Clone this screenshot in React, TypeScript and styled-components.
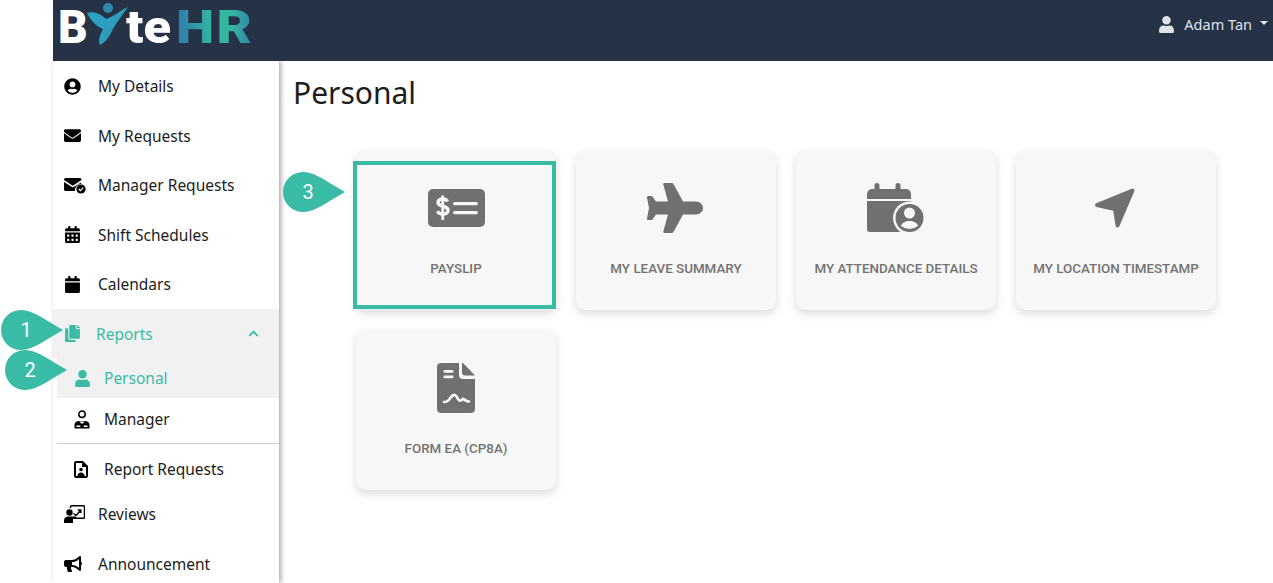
import React from 'react';
import styled, { createGlobalStyle } from 'styled-components';
import {
  FaUserCircle,
  FaEnvelope,
  FaCalendarAlt,
  FaCalendar,
  FaCopy,
  FaChevronUp,
  FaUser,
  FaBullhorn,
} from 'react-icons/fa';

const teal = '#3abba5';
const cardInk = '#707070';
const cardBg = '#f7f7f7';

const GlobalStyle = createGlobalStyle`
  html, body {
    margin: 0;
    padding: 0;
    background: #fff;
  }
  body {
    font-family: "Noto Sans", "Liberation Sans", sans-serif;
  }
`;

const Page = styled.div`
  position: relative;
  width: 1273px;
  height: 583px;
  overflow: hidden;
  padding-left: 53px;
  box-sizing: border-box;
  display: flex;
  flex-direction: column;
`;

const TopBar = styled.header`
  height: 61px;
  flex: none;
  background: #263246;
  display: flex;
  justify-content: space-between;
  align-items: flex-start;
  position: relative;
  z-index: 2;
`;

const Logo = styled.div`
  display: flex;
  align-items: flex-start;
  padding-left: 5px;
  font-family: Roboto, "Liberation Sans", sans-serif;
  font-weight: 900;
  font-size: 46px;
  line-height: 54px;
  color: #fff;
`;

const LogoFigure = styled.svg`
  width: 46px;
  height: 44px;
  margin: 2px -3px 0 -5px;
  flex: none;
`;

const LogoWhite = styled.span`
  display: inline-block;
  transform: scaleX(1.1);
  transform-origin: left center;
`;

const LogoAccent = styled.span`
  display: inline-block;
  margin-left: 9px;
  letter-spacing: 2px;
  transform: scaleX(1.18);
  transform-origin: left center;
  background: linear-gradient(90deg, #2e78ae 0%, #34b5a0 45%, #34b5a0 72%, #2f7fad 100%);
  -webkit-background-clip: text;
  background-clip: text;
  color: transparent;
`;

const UserMenu = styled.div`
  display: flex;
  align-items: center;
  height: 48px;
  padding-right: 5px;
  color: #dfe3e8;
  font-size: 14.5px;
  svg {
    width: 17px;
    height: 17px;
    margin-right: 9px;
  }
`;

const Caret = styled.span`
  width: 0;
  height: 0;
  margin-left: 8px;
  margin-top: -3px;
  border-left: 4px solid transparent;
  border-right: 4px solid transparent;
  border-top: 4px solid #dfe3e8;
`;

const Body = styled.div`
  flex: 1;
  display: flex;
  min-height: 0;
`;

const Sidebar = styled.nav`
  width: 226px;
  flex: none;
  padding-top: 0.25px;
  background: #fff;
  box-shadow: 2px 0 5px rgba(0, 0, 0, 0.35);
  position: relative;
  z-index: 1;
`;

const NavItem = styled.div<{ $open?: boolean }>`
  height: 49.5px;
  display: flex;
  align-items: center;
  padding-left: 11px;
  font-size: 15.5px;
  color: ${(p) => (p.$open ? teal : '#1c1c1c')};
  background: ${(p) => (p.$open ? '#f1f1f1' : 'transparent')};
`;

const NavIcon = styled.span<{ $w?: number; $size?: number; $tint?: boolean }>`
  width: ${(p) => p.$w ?? 34}px;
  flex: none;
  display: flex;
  align-items: center;
  font-size: ${(p) => p.$size ?? 17}px;
  color: ${(p) => (p.$tint ? 'inherit' : '#000')};
  svg {
    display: block;
  }
`;

const Chevron = styled.span`
  margin-left: auto;
  margin-right: 20px;
  display: flex;
  font-size: 11px;
`;

const SubList = styled.div`
  margin-left: 4px;
`;

const SubItem = styled.div<{ $active?: boolean; $h?: number }>`
  height: ${(p) => p.$h ?? 40}px;
  display: flex;
  align-items: center;
  padding-left: 17px;
  font-size: 15.5px;
  color: ${(p) => (p.$active ? teal : '#1c1c1c')};
  background: ${(p) => (p.$active ? '#f1f1f1' : 'transparent')};
`;

const SubIcon = styled.span`
  width: 30px;
  flex: none;
  display: flex;
  align-items: center;
  font-size: 17px;
  svg {
    display: block;
  }
`;

const Divider = styled.div`
  height: 1px;
  background: #c9c9c9;
  margin: 3px 0 5px;
`;

const Main = styled.main`
  flex: 1;
  padding: 8px 14px 0;
  min-width: 0;
`;

const Title = styled.h1`
  margin: 0;
  font-size: 30px;
  font-weight: 400;
  line-height: 48px;
  color: #1d1d1d;
`;

const CardGrid = styled.div`
  display: grid;
  grid-template-columns: repeat(4, 200px);
  grid-auto-rows: 160px;
  gap: 20px;
  margin: 33px 0 0 63px;
`;

const Card = styled.div`
  position: relative;
  background: ${cardBg};
  border-radius: 10px;
  box-shadow: 0 4px 10px rgba(0, 0, 0, 0.14);
  display: flex;
  flex-direction: column;
  align-items: center;
`;

const CardIcon = styled.div`
  height: 50px;
  margin-top: 33px;
  display: flex;
  align-items: center;
  justify-content: center;
  svg {
    display: block;
  }
`;

const CardLabel = styled.div`
  margin-top: 28px;
  font-family: Roboto, "Liberation Sans", sans-serif;
  font-weight: 500;
  font-size: 13.4px;
  line-height: 16px;
  color: #727272;
  white-space: nowrap;
`;

/* the tutorial's highlight around the first card */
const Highlight = styled.div`
  position: absolute;
  left: -3px;
  right: 0;
  top: 11px;
  bottom: 1px;
  border: 4px solid ${teal};
`;

const CalloutWrap = styled.div<{ $x: number; $y: number }>`
  position: absolute;
  left: ${(p) => p.$x}px;
  top: ${(p) => p.$y}px;
  width: 62px;
  height: 40px;
  z-index: 5;
  svg {
    display: block;
  }
`;

const CalloutNumber = styled.span`
  position: absolute;
  left: 0;
  top: 0;
  width: 50px;
  text-align: center;
  line-height: 40px;
  font-family: Roboto, "Liberation Sans", sans-serif;
  font-size: 20px;
  color: #fff;
`;

const Callout = ({ n, x, y }: { n: number; x: number; y: number }) => (
  <CalloutWrap $x={x} $y={y}>
    <svg width="62" height="40" viewBox="0 0 62 40">
      <path d="M20 0C33 0 47 12 62 20C47 28 33 40 20 40A20 20 0 0 1 20 0Z" fill={teal} />
    </svg>
    <CalloutNumber>{n}</CalloutNumber>
  </CalloutWrap>
);

const ManagerIcon = () => (
  <svg width="16" height="19" viewBox="0 0 16 19">
    <circle cx="8" cy="4.200" r="3.200" fill="none" stroke="#000" strokeWidth="1.500" />
    <path d="M0.500 18.500v-3.500c0-2.400 2.200-4 4.500-4h6c2.300 0 4.500 1.600 4.500 4v3.500z" fill="#000" />
    <path d="M5.200 11.500l2.800 2.400 2.800-2.400z" fill="#fff" />
    <path d="M2.500 17h3.800v-1.500H2.500zM9.700 17h3.800v-1.500H9.700z" fill="#fff" />
  </svg>
);

const ReportFileIcon = () => (
  <svg width="14" height="17" viewBox="0 0 14 17">
    <path
      fillRule="evenodd"
      d="M2 0h7l5 5v10a2 2 0 0 1-2 2H2a2 2 0 0 1-2-2V2a2 2 0 0 1 2-2zm0 2v13h10V6H8V2z"
      fill="#000"
    />
    <circle cx="7" cy="8.500" r="1.800" fill="#000" />
    <path d="M3.500 15c0-2.200 1.500-3.600 3.500-3.600s3.500 1.400 3.500 3.600z" fill="#000" />
  </svg>
);

const EnvelopeCheckIcon = () => (
  <svg width="22" height="17" viewBox="0 0 22 17">
    <path d="M1.500 1h14.500a1.500 1.500 0 0 1 1.500 1.500v.6L8.800 8.700 0 3.100v-.6A1.500 1.500 0 0 1 1.500 1z" fill="#000" />
    <path d="M0 5l8.800 5.600L17 5.400V7a6 6 0 0 0-5.900 7H1.500A1.500 1.500 0 0 1 0 12.500z" fill="#000" />
    <circle cx="17" cy="12" r="4.600" fill="#000" />
    <path d="M14.800 12l1.600 1.600 2.800-2.900" fill="none" stroke="#fff" strokeWidth="1.200" />
  </svg>
);

const ReviewsIcon = () => (
  <svg width="21" height="18" viewBox="0 0 21 18">
    <path d="M6.500 3V1.800a1 1 0 0 1 1-1h12a1 1 0 0 1 1 1v10.400a1 1 0 0 1-1 1H12" fill="none" stroke="#000" strokeWidth="1.500" />
    <path d="M9.500 8.500l2.500 2 4.500-5M13.800 5h3v3" fill="none" stroke="#000" strokeWidth="1.400" />
    <circle cx="5.500" cy="7.500" r="3.200" fill="#000" />
    <path d="M0 18v-2.500C0 13 2 11.500 4.500 11.500H12v2.500H9v4z" fill="#000" />
  </svg>
);

const PayslipIcon = () => (
  <svg width="57" height="38" viewBox="0 0 57 38">
    <rect width="57" height="38" rx="5" fill={cardInk} />
    <path
      d="M19.500 12.500C18.500 10.500 16.500 10 14.500 10c-2.500 0-4.500 1.300-4.500 3.500 0 5 10 2.500 10 7.800 0 2.300-2.200 3.700-5 3.700-2.500 0-4.500-.8-5.500-2.800"
      fill="none"
      stroke={cardBg}
      strokeWidth="3.400"
    />
    <path d="M14.700 6.500v24.500" stroke={cardBg} strokeWidth="2.800" />
    <rect x="25" y="13" width="25" height="3.200" rx="1.600" fill={cardBg} />
    <rect x="25" y="22" width="25" height="3.200" rx="1.600" fill={cardBg} />
  </svg>
);

const PlaneIcon = () => (
  <svg width="60" height="50" viewBox="0 0 60 50">
    <path
      d="M17 1Q17 0 19 0H26Q27 0 28 2L37 18.500H50C54 18.500 57 21.500 57 25S54 31.500 50 31.500H37L28 48Q27 50 26 50H19Q17 50 17.300 48.500L22 31.500H10L6.500 36.500Q6 37 5 37H2Q.7 37 1 35.500L3 25 1 14.500Q.7 13 2 13H5Q6 13 6.500 13.500L10 18.500H22L17.300 1.500z"
      fill={cardInk}
    />
  </svg>
);

const AttendanceIcon = () => (
  <svg width="58" height="50" viewBox="0 0 58 50" fill={cardInk}>
    <path d="M10 0a2.500 2.500 0 0 1 2.500 2.500V6h16V2.500a2.500 2.500 0 0 1 5 0V6H39a5 5 0 0 1 5 5v5H0v-5a5 5 0 0 1 5-5h2.500V2.500A2.500 2.500 0 0 1 10 0z" />
    <path d="M0 18h44v28a3 3 0 0 1-3 3H3a3 3 0 0 1-3-3z" />
    <circle cx="42.500" cy="35" r="16.500" fill={cardBg} />
    <circle cx="42.500" cy="35" r="14" />
    <circle cx="42.500" cy="30" r="5.500" fill={cardBg} />
    <path d="M34 43c1-3.500 4.500-5 8.500-5s7.500 1.500 8.500 5a14 14 0 0 1-17 0z" fill={cardBg} />
  </svg>
);

const LocationIcon = () => (
  <svg width="44" height="42" viewBox="0 0 44 42">
    <path
      d="M38.500 3.500L3 18L21 22L23.500 38.500z"
      fill={cardInk}
      stroke={cardInk}
      strokeWidth="4"
      strokeLinejoin="round"
    />
  </svg>
);

const FormIcon = () => (
  <svg width="38" height="50" viewBox="0 0 38 50">
    <path d="M4 0h18v12a4 4 0 0 0 4 4h12v30a4 4 0 0 1-4 4H4a4 4 0 0 1-4-4V4a4 4 0 0 1 4-4z" fill={cardInk} />
    <path d="M25 0l1 0L38 12.500H28a3 3 0 0 1-3-3z" fill={cardInk} />
    <rect x="6.500" y="7" width="10" height="2.800" rx="1.200" fill={cardBg} />
    <rect x="6.500" y="12.500" width="10" height="2.800" rx="1.200" fill={cardBg} />
    <path
      d="M7 39c3 0 4-.5 6-3.500s3-4 5-3.500 2 4.500 4.500 5.500 2.500-2 4-1.500 2 2.500 5.500 2.500"
      fill="none"
      stroke={cardBg}
      strokeWidth="2.700"
      strokeLinecap="round"
    />
  </svg>
);

const cards = [
  { label: 'PAYSLIP', icon: <PayslipIcon />, highlight: true },
  { label: 'MY LEAVE SUMMARY', icon: <PlaneIcon /> },
  { label: 'MY ATTENDANCE DETAILS', icon: <AttendanceIcon /> },
  { label: 'MY LOCATION TIMESTAMP', icon: <LocationIcon /> },
  { label: 'FORM EA (CP8A)', icon: <FormIcon /> },
];

export default function App() {
  return (
    <>
      <GlobalStyle />
      <Page>
        <TopBar>
          <Logo>
            B
            <LogoFigure viewBox="0 0 46 44">
              <defs>
                <linearGradient id="figure" x1="0" y1="0" x2="1" y2="1">
                  <stop offset="0" stopColor="#2ba6c8" />
                  <stop offset="1" stopColor="#2f96b4" />
                </linearGradient>
              </defs>
              <circle cx="25" cy="6" r="5" fill="#2f88ad" />
              <path
                d="M4 11C10 9 18 12 23 17C30 15 38 8 45 5C40 12 34 20 30 27C27 34 23 40 17 43C15 38 17 33 20 27C14 25 8 19 4 11Z"
                fill="url(#figure)"
              />
            </LogoFigure>
            <LogoWhite>te</LogoWhite>
            <LogoAccent>HR</LogoAccent>
          </Logo>
          <UserMenu>
            <FaUser />
            Adam Tan
            <Caret />
          </UserMenu>
        </TopBar>
        <Body>
          <Sidebar>
            <NavItem>
              <NavIcon><FaUserCircle /></NavIcon>
              My Details
            </NavItem>
            <NavItem>
              <NavIcon><FaEnvelope /></NavIcon>
              My Requests
            </NavItem>
            <NavItem>
              <NavIcon><EnvelopeCheckIcon /></NavIcon>
              Manager Requests
            </NavItem>
            <NavItem>
              <NavIcon><FaCalendarAlt /></NavIcon>
              Shift Schedules
            </NavItem>
            <NavItem>
              <NavIcon><FaCalendar /></NavIcon>
              Calendars
            </NavItem>
            <NavItem $open>
              <NavIcon $tint $w={32}><FaCopy /></NavIcon>
              Reports
              <Chevron><FaChevronUp /></Chevron>
            </NavItem>
            <SubList>
              <SubItem $active>
                <SubIcon><FaUser /></SubIcon>
                Personal
              </SubItem>
              <SubItem $h={42}>
                <SubIcon><ManagerIcon /></SubIcon>
                Manager
              </SubItem>
              <Divider />
              <SubItem>
                <SubIcon><ReportFileIcon /></SubIcon>
                Report Requests
              </SubItem>
            </SubList>
            <NavItem>
              <NavIcon><ReviewsIcon /></NavIcon>
              Reviews
            </NavItem>
            <NavItem>
              <NavIcon $size={18}><FaBullhorn /></NavIcon>
              Announcement
            </NavItem>
          </Sidebar>
          <Main>
            <Title>Personal</Title>
            <CardGrid>
              {cards.map((c) => (
                <Card key={c.label}>
                  <CardIcon>{c.icon}</CardIcon>
                  <CardLabel>{c.label}</CardLabel>
                  {c.highlight && <Highlight />}
                </Card>
              ))}
            </CardGrid>
          </Main>
        </Body>
        <Callout n={1} x={1} y={310} />
        <Callout n={2} x={5} y={350} />
        <Callout n={3} x={283} y={172} />
      </Page>
    </>
  );
}
